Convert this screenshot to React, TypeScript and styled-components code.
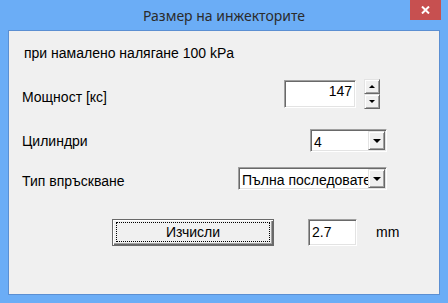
import styled, { createGlobalStyle } from 'styled-components';

const GlobalStyle = createGlobalStyle`
  html, body {
    margin: 0;
    padding: 0;
    background: #6badf6;
  }
  body {
    font-family: "Liberation Sans", Arial, sans-serif;
  }
`;

const Window = styled.div`
  width: 448px;
  height: 303px;
  box-sizing: border-box;
  background: #6badf6;
  display: flex;
  flex-direction: column;
  padding: 0 8px 8px;
`;

const TitleBar = styled.div`
  height: 30px;
  margin: 0 -8px;
  display: grid;
  grid-template-columns: 1fr auto 1fr;
  align-items: center;
`;

const Title = styled.div`
  grid-column: 2;
  font-family: "Noto Sans", "Open Sans", sans-serif;
  font-size: 14px;
  color: #2b2b2b;
  padding-top: 1px;
`;

const CloseButton = styled.div`
  grid-column: 3;
  justify-self: end;
  align-self: start;
  width: 31px;
  height: 20px;
  margin-right: 7px;
  background: #c75050;
  display: flex;
  align-items: center;
  justify-content: center;
`;

const Client = styled.div`
  flex: 1;
  background: #f0f0f0;
  border: 1px solid #5b8fd2;
  display: flex;
  flex-direction: column;
  padding: 14px 0 0 13px;
`;

const Row = styled.div<{ $top: number }>`
  display: flex;
  align-items: flex-start;
  margin-top: ${(p) => p.$top}px;
`;

const Label = styled.div<{ $top?: number; $left?: number }>`
  font-size: 14px;
  line-height: 16px;
  color: #000;
  white-space: nowrap;
  margin-top: ${(p) => p.$top ?? 0}px;
  margin-left: ${(p) => p.$left ?? 0}px;
`;

const Spacer = styled.div`
  flex: 1;
`;

const Sunken = styled.div<{ $w: number; $h: number; $right?: number; $left?: number; $top?: number }>`
  box-sizing: border-box;
  width: ${(p) => p.$w}px;
  height: ${(p) => p.$h}px;
  margin-right: ${(p) => p.$right ?? 0}px;
  margin-left: ${(p) => p.$left ?? 0}px;
  margin-top: ${(p) => p.$top ?? 0}px;
  background: #fff;
  border: 1px solid;
  border-color: #a0a0a0 #fff #fff #a0a0a0;
  box-shadow: inset 1px 1px 0 #696969, inset -1px -1px 0 #e3e3e3;
  padding: 1px;
  display: flex;
  font-size: 14px;
  line-height: 16px;
  color: #000;
`;

const FieldText = styled.div<{ $align?: 'left' | 'right'; $pad: number }>`
  flex: 1;
  min-width: 0;
  overflow: hidden;
  white-space: nowrap;
  text-align: ${(p) => p.$align ?? 'left'};
  padding-top: ${(p) => p.$pad}px;
  padding-left: 2px;
  padding-right: 2px;
`;

const Raised = styled.div<{ $w: number; $h: number }>`
  box-sizing: border-box;
  width: ${(p) => p.$w}px;
  height: ${(p) => p.$h}px;
  background: #f0f0f0;
  border: 1px solid;
  border-color: #e3e3e3 #696969 #696969 #e3e3e3;
  box-shadow: inset 1px 1px 0 #fff, inset -1px -1px 0 #a0a0a0;
  display: flex;
  align-items: center;
  justify-content: center;
`;

const Arrow = styled.span<{ $dir: 'up' | 'down'; $size: number }>`
  width: 0;
  height: 0;
  border-left: ${(p) => p.$size}px solid transparent;
  border-right: ${(p) => p.$size}px solid transparent;
  ${(p) =>
    p.$dir === 'up'
      ? `border-bottom: ${p.$size}px solid #000;`
      : `border-top: ${p.$size}px solid #000;`}
`;

const SpinGroup = styled.div<{ $right: number }>`
  display: flex;
  gap: 8px;
  margin-right: ${(p) => p.$right}px;
`;

const SpinButtons = styled.div`
  display: flex;
  flex-direction: column;
`;

const PushButton = styled.div<{ $left: number }>`
  box-sizing: border-box;
  width: 162px;
  height: 27px;
  margin-left: ${(p) => p.$left}px;
  background: #f0f0f0;
  border: 1px solid #696969;
  box-shadow: inset 1px 1px 0 #fff, inset -1px -1px 0 #696969, inset -2px -2px 0 #a0a0a0;
  padding: 2px 3px 3px 3px;
  display: flex;
`;

const FocusRing = styled.div`
  flex: 1;
  border: 1px dotted #000;
  display: flex;
  align-items: center;
  justify-content: center;
  font-size: 14px;
  line-height: 16px;
  color: #000;
`;

function Combo({ text, width, right }: { text: string; width: number; right: number }) {
  return (
    <Sunken $w={width} $h={23} $right={right}>
      <FieldText $pad={3}>{text}</FieldText>
      <Raised $w={17} $h={19}>
        <Arrow $dir="down" $size={4} />
      </Raised>
    </Sunken>
  );
}

export default function App() {
  return (
    <>
      <GlobalStyle />
      <Window>
        <TitleBar>
          <Title>Размер на инжекторите</Title>
          <CloseButton>
            <svg width="9" height="8" viewBox="0 0 9 8">
              <path d="M1 0.5 L8 7.5 M8 0.5 L1 7.5" stroke="#fff" strokeWidth="2" />
            </svg>
          </CloseButton>
        </TitleBar>
        <Client>
          <Row $top={0}>
            <Label $left={2}>при намалено налягане 100 kPa</Label>
          </Row>

          <Row $top={18}>
            <Label $top={10}>Мощност [кс]</Label>
            <Spacer />
            <SpinGroup $right={59}>
              <Sunken $w={72} $h={28} $top={1}>
                <FieldText $align="right" $pad={1}>147</FieldText>
              </Sunken>
              <SpinButtons>
                <Raised $w={16} $h={15}>
                  <Arrow $dir="up" $size={3} />
                </Raised>
                <Raised $w={16} $h={15}>
                  <Arrow $dir="down" $size={3} />
                </Raised>
              </SpinButtons>
            </SpinGroup>
          </Row>

          <Row $top={20}>
            <Label $top={4}>Цилиндри</Label>
            <Spacer />
            <Combo text="4" width={77} right={52} />
          </Row>

          <Row $top={15}>
            <Label $top={6}>Тип впръскване</Label>
            <Spacer />
            <Combo text="Пълна последователна" width={149} right={52} />
          </Row>

          <Row $top={29}>
            <PushButton $left={90}>
              <FocusRing>Изчисли</FocusRing>
            </PushButton>
            <Sunken $w={49} $h={27} $left={34}>
              <FieldText $pad={3}>2.7</FieldText>
            </Sunken>
            <Label $top={5} $left={19}>mm</Label>
          </Row>
        </Client>
      </Window>
    </>
  );
}
